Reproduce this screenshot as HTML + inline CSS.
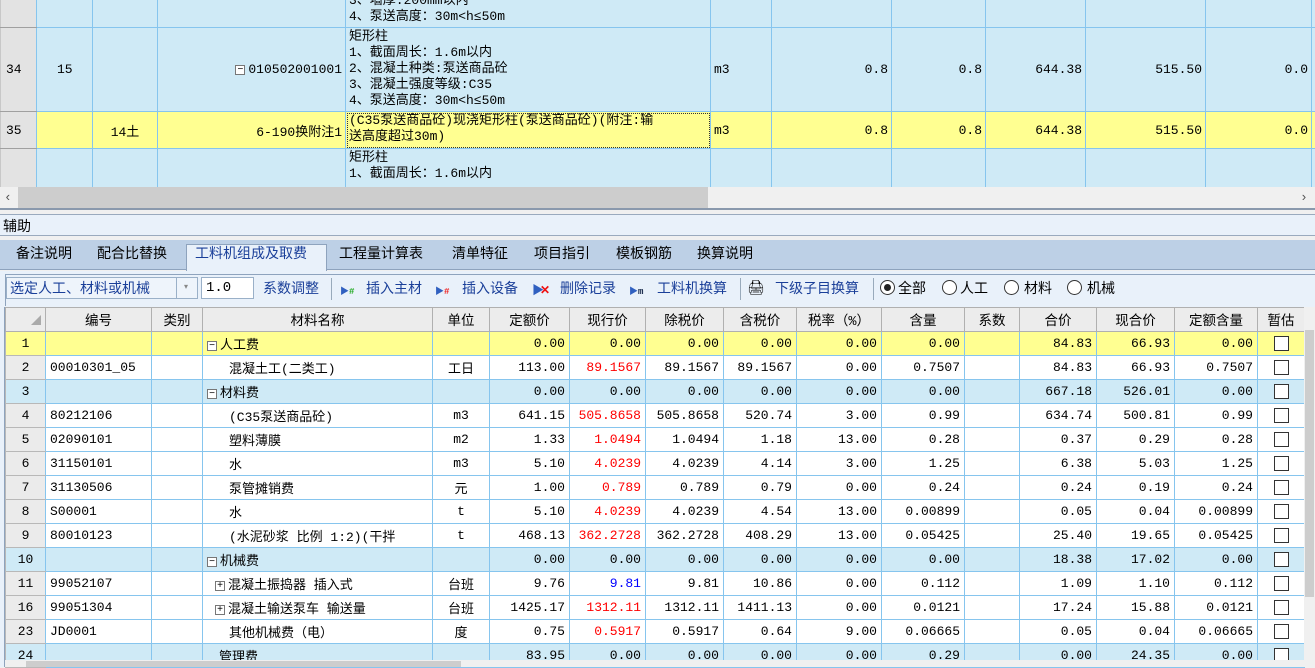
<!DOCTYPE html>
<html><head><meta charset="utf-8">
<style>
*{margin:0;padding:0;box-sizing:border-box}
body{width:1315px;height:667px;overflow:hidden;background:#f0f0f0;font-family:"Liberation Mono","Noto Sans CJK SC",monospace;font-size:13px;color:#000;position:relative}
.abs{position:absolute}
table{border-collapse:collapse;table-layout:fixed;position:absolute}
td{border:1px solid #86c5ee;white-space:nowrap;overflow:hidden;padding:0 3px;vertical-align:middle}
.top td{background:#cfeaf6}
.top td.rh{background:#e3e3e3;border-color:#c8c8c8 #86c5ee #a0a0a0 #c8c8c8;text-align:left;padding-left:5px}
.top tr.y td{background:#ffff91}
.top tr.y td.rh{background:#e3e3e3}
.r{text-align:right}
.c{text-align:center}
.desc{line-height:16px;vertical-align:top;padding-top:1px}
.bot td{height:24px;background:#fff;padding:0 4px}
.bot tr.b td{background:#cfeaf6}
.bot tr.y td{background:#ffff91}
.bot td.rh{background:#ebebeb;text-align:center;border-color:#b8b8b8 #86c5ee #b8b8b8 #b8b8b8}
.bot tr.h td{background:#ececec;text-align:center;border-color:#b0b0b0;font-size:13.5px}
.red{color:#f00}.blu{color:#00f}
.cb{display:inline-block;width:15px;height:15px;border:1px solid #333;background:#fff;vertical-align:middle}
.mi{display:inline-block;width:10px;height:10px;border:1px solid #777;background:#fff;font-size:10px;line-height:8px;text-align:center;vertical-align:middle;margin-right:3px;font-family:"Liberation Sans",sans-serif}
.tab{position:absolute;top:243px;font-size:14px;font-family:"Liberation Sans","Noto Sans CJK SC",sans-serif}
.tb{position:absolute;top:278px;font-size:14px;color:#1a3f99;font-family:"Liberation Sans","Noto Sans CJK SC",sans-serif}
.rad{position:absolute;top:280px;width:15px;height:15px;border:1px solid #333;border-radius:50%;background:#fff}
.sep{position:absolute;top:278px;width:1px;height:22px;background:#9ab}
</style></head><body>

<div class="abs" style="left:0;top:0;width:1315px;height:187px;overflow:hidden;background:#cfeaf6">
<table class="top" style="left:0;top:-56px;width:1420px">
<colgroup><col style="width:36px"><col style="width:56px"><col style="width:65px"><col style="width:188px"><col style="width:365px"><col style="width:61px"><col style="width:120px"><col style="width:94px"><col style="width:100px"><col style="width:120px"><col style="width:106px"><col style="width:109px"></colgroup>
<tr style="height:83px"><td class="rh"></td><td></td><td></td><td></td><td class="desc" style="vertical-align:bottom;padding-bottom:2px">3、墙厚:200mm以内<br>4、泵送高度：30m&lt;h≤50m</td><td></td><td></td><td></td><td></td><td></td><td></td><td></td></tr>
<tr style="height:84px"><td class="rh">34</td><td style="padding-left:20px">15</td><td></td><td class="r"><span class="mi">−</span>010502001001</td><td class="desc">矩形柱<br>1、截面周长：1.6m以内<br>2、混凝土种类:泵送商品砼<br>3、混凝土强度等级:C35<br>4、泵送高度：30m&lt;h≤50m</td><td>m3</td><td class="r">0.8</td><td class="r">0.8</td><td class="r">644.38</td><td class="r">515.50</td><td class="r">0.0</td><td></td></tr>
<tr class="y" style="height:37px"><td class="rh">35</td><td></td><td class="c">14土</td><td class="r">6-190换附注1</td><td class="desc" style="outline:1px dotted #333;outline-offset:-2px">(C35泵送商品砼)现浇矩形柱(泵送商品砼)(附注:输<br>送高度超过30m)</td><td>m3</td><td class="r">0.8</td><td class="r">0.8</td><td class="r">644.38</td><td class="r">515.50</td><td class="r">0.0</td><td></td></tr>
<tr style="height:84px"><td class="rh"></td><td></td><td></td><td></td><td class="desc">矩形柱<br>1、截面周长：1.6m以内</td><td></td><td></td><td></td><td></td><td></td><td></td><td></td></tr>
</table>
</div>
<div class="abs" style="left:0;top:187px;width:1315px;height:21px;background:#f0f0f0"></div>
<div class="abs" style="left:18px;top:187px;width:690px;height:21px;background:#cdcdcd"></div>
<div class="abs" style="left:4px;top:190px;font-size:13px;color:#555">&lsaquo;</div>
<div class="abs" style="left:1300px;top:190px;font-size:13px;color:#555">&rsaquo;</div>
<div class="abs" style="left:0;top:208px;width:1315px;height:2px;background:#8a99ad"></div>
<div class="abs" style="left:0;top:214px;width:1315px;height:22px;background:#e9f1fa;border-top:1px solid #9aaabe;border-bottom:1px solid #9aaabe"></div>
<div class="abs" style="left:3px;top:216px;font-size:14px;font-family:'Liberation Sans','Noto Sans CJK SC',sans-serif">辅助</div>
<div class="abs" style="left:0;top:240px;width:1315px;height:30px;background:#bdd0e6;border-bottom:1px solid #8ea3bd"></div>
<div class="abs" style="left:186px;top:244px;width:141px;height:27px;background:#e9f1fa;border:1px solid #8ea3bd;border-bottom:none"></div>
<div class="tab" style="left:16px">备注说明</div>
<div class="tab" style="left:97px">配合比替换</div>
<div class="tab" style="left:195px;color:#1a3f99">工料机组成及取费</div>
<div class="tab" style="left:339px">工程量计算表</div>
<div class="tab" style="left:452px">清单特征</div>
<div class="tab" style="left:534px">项目指引</div>
<div class="tab" style="left:616px">模板钢筋</div>
<div class="tab" style="left:697px">换算说明</div>
<div class="abs" style="left:0;top:271px;width:1315px;height:36px;background:#e9f1fa"></div>
<div class="abs" style="left:5px;top:274px;width:1310px;height:32px;border-top:1px solid #8ea3bd;border-left:1px solid #8ea3bd"></div>
<div class="abs" style="left:6px;top:277px;width:192px;height:22px;border:1px solid #9ab0c8;background:#eef4fb"></div>
<div class="abs" style="left:176px;top:278px;width:1px;height:20px;background:#9ab0c8"></div>
<div class="abs" style="left:184px;top:282px;font-size:8px;color:#888">▾</div>
<div class="tb" style="left:10px;top:278px">选定人工、材料或机械</div>
<div class="abs" style="left:201px;top:277px;width:53px;height:22px;border:1px solid #9ab0c8;background:#fff;padding:2px 4px;font-size:14px">1.0</div>
<div class="tb" style="left:263px">系数调整</div>
<div class="sep" style="left:331px"></div>
<div class="abs" style="left:340px;top:284px;font-size:9px;color:#3060c0">▶<span style="color:#2a2;font-weight:bold">#</span></div>
<div class="tb" style="left:366px">插入主材</div>
<div class="abs" style="left:435px;top:284px;font-size:9px;color:#3060c0">▶<span style="color:#e22;font-weight:bold">#</span></div>
<div class="tb" style="left:462px">插入设备</div>
<div class="abs" style="left:532px;top:281px;font-size:12px;color:#3060c0">▶<span style="color:#e11;font-weight:bold;margin-left:-4px">✕</span></div>
<div class="tb" style="left:560px">删除记录</div>
<div class="abs" style="left:629px;top:284px;font-size:9px;color:#3060c0">▶<b style="color:#124">m</b></div>
<div class="tb" style="left:657px">工料机换算</div>
<div class="sep" style="left:740px"></div>
<div class="abs" style="left:747px;top:280px;font-size:14px">🖨</div>
<div class="tb" style="left:775px">下级子目换算</div>
<div class="sep" style="left:873px"></div>
<div class="rad" style="left:880px"><div style="margin:3px;width:7px;height:7px;border-radius:50%;background:#222"></div></div>
<div class="tb" style="left:898px;color:#000">全部</div>
<div class="rad" style="left:942px"></div><div class="tb" style="left:960px;color:#000">人工</div>
<div class="rad" style="left:1004px"></div><div class="tb" style="left:1024px;color:#000">材料</div>
<div class="rad" style="left:1067px"></div><div class="tb" style="left:1087px;color:#000">机械</div>

<div class="abs" style="left:0;top:307px;width:1315px;height:360px;background:#fff"></div>
<table class="bot" style="left:5px;top:307px;width:1299px">
<colgroup><col style="width:40px"><col style="width:106px"><col style="width:51px"><col style="width:230px"><col style="width:57px"><col style="width:80px"><col style="width:76px"><col style="width:78px"><col style="width:73px"><col style="width:85px"><col style="width:83px"><col style="width:55px"><col style="width:77px"><col style="width:78px"><col style="width:83px"><col style="width:47px"></colgroup>
<tr class="h"><td style="text-align:right;color:#aaa;font-size:10px">◢</td><td>编号</td><td>类别</td><td>材料名称</td><td>单位</td><td>定额价</td><td>现行价</td><td>除税价</td><td>含税价</td><td>税率（%）</td><td>含量</td><td>系数</td><td>合价</td><td>现合价</td><td>定额含量</td><td>暂估</td></tr>
<tr class="y"><td class="rh">1</td><td></td><td></td><td><span class="mi">−</span>人工费</td><td></td><td class="r">0.00</td><td class="r">0.00</td><td class="r">0.00</td><td class="r">0.00</td><td class="r">0.00</td><td class="r">0.00</td><td></td><td class="r">84.83</td><td class="r">66.93</td><td class="r">0.00</td><td class="c"><span class="cb"></span></td></tr>
<tr><td class="rh">2</td><td>00010301_05</td><td></td><td style="padding-left:26px">混凝土工(二类工)</td><td class="c">工日</td><td class="r">113.00</td><td class="r red">89.1567</td><td class="r">89.1567</td><td class="r">89.1567</td><td class="r">0.00</td><td class="r">0.7507</td><td></td><td class="r">84.83</td><td class="r">66.93</td><td class="r">0.7507</td><td class="c"><span class="cb"></span></td></tr>
<tr class="b"><td class="rh">3</td><td></td><td></td><td><span class="mi">−</span>材料费</td><td></td><td class="r">0.00</td><td class="r">0.00</td><td class="r">0.00</td><td class="r">0.00</td><td class="r">0.00</td><td class="r">0.00</td><td></td><td class="r">667.18</td><td class="r">526.01</td><td class="r">0.00</td><td class="c"><span class="cb"></span></td></tr>
<tr><td class="rh">4</td><td>80212106</td><td></td><td style="padding-left:26px">(C35泵送商品砼)</td><td class="c">m3</td><td class="r">641.15</td><td class="r red">505.8658</td><td class="r">505.8658</td><td class="r">520.74</td><td class="r">3.00</td><td class="r">0.99</td><td></td><td class="r">634.74</td><td class="r">500.81</td><td class="r">0.99</td><td class="c"><span class="cb"></span></td></tr>
<tr><td class="rh">5</td><td>02090101</td><td></td><td style="padding-left:26px">塑料薄膜</td><td class="c">m2</td><td class="r">1.33</td><td class="r red">1.0494</td><td class="r">1.0494</td><td class="r">1.18</td><td class="r">13.00</td><td class="r">0.28</td><td></td><td class="r">0.37</td><td class="r">0.29</td><td class="r">0.28</td><td class="c"><span class="cb"></span></td></tr>
<tr><td class="rh">6</td><td>31150101</td><td></td><td style="padding-left:26px">水</td><td class="c">m3</td><td class="r">5.10</td><td class="r red">4.0239</td><td class="r">4.0239</td><td class="r">4.14</td><td class="r">3.00</td><td class="r">1.25</td><td></td><td class="r">6.38</td><td class="r">5.03</td><td class="r">1.25</td><td class="c"><span class="cb"></span></td></tr>
<tr><td class="rh">7</td><td>31130506</td><td></td><td style="padding-left:26px">泵管摊销费</td><td class="c">元</td><td class="r">1.00</td><td class="r red">0.789</td><td class="r">0.789</td><td class="r">0.79</td><td class="r">0.00</td><td class="r">0.24</td><td></td><td class="r">0.24</td><td class="r">0.19</td><td class="r">0.24</td><td class="c"><span class="cb"></span></td></tr>
<tr><td class="rh">8</td><td>S00001</td><td></td><td style="padding-left:26px">水</td><td class="c">t</td><td class="r">5.10</td><td class="r red">4.0239</td><td class="r">4.0239</td><td class="r">4.54</td><td class="r">13.00</td><td class="r">0.00899</td><td></td><td class="r">0.05</td><td class="r">0.04</td><td class="r">0.00899</td><td class="c"><span class="cb"></span></td></tr>
<tr><td class="rh">9</td><td>80010123</td><td></td><td style="padding-left:26px">(水泥砂浆 比例 1:2)(干拌</td><td class="c">t</td><td class="r">468.13</td><td class="r red">362.2728</td><td class="r">362.2728</td><td class="r">408.29</td><td class="r">13.00</td><td class="r">0.05425</td><td></td><td class="r">25.40</td><td class="r">19.65</td><td class="r">0.05425</td><td class="c"><span class="cb"></span></td></tr>
<tr class="b"><td class="rh">10</td><td></td><td></td><td><span class="mi">−</span>机械费</td><td></td><td class="r">0.00</td><td class="r">0.00</td><td class="r">0.00</td><td class="r">0.00</td><td class="r">0.00</td><td class="r">0.00</td><td></td><td class="r">18.38</td><td class="r">17.02</td><td class="r">0.00</td><td class="c"><span class="cb"></span></td></tr>
<tr><td class="rh">11</td><td>99052107</td><td></td><td style="padding-left:12px"><span class="mi">+</span>混凝土振捣器 插入式</td><td class="c">台班</td><td class="r">9.76</td><td class="r blu">9.81</td><td class="r">9.81</td><td class="r">10.86</td><td class="r">0.00</td><td class="r">0.112</td><td></td><td class="r">1.09</td><td class="r">1.10</td><td class="r">0.112</td><td class="c"><span class="cb"></span></td></tr>
<tr><td class="rh">16</td><td>99051304</td><td></td><td style="padding-left:12px"><span class="mi">+</span>混凝土输送泵车 输送量</td><td class="c">台班</td><td class="r">1425.17</td><td class="r red">1312.11</td><td class="r">1312.11</td><td class="r">1411.13</td><td class="r">0.00</td><td class="r">0.0121</td><td></td><td class="r">17.24</td><td class="r">15.88</td><td class="r">0.0121</td><td class="c"><span class="cb"></span></td></tr>
<tr><td class="rh">23</td><td>JD0001</td><td></td><td style="padding-left:26px">其他机械费（电）</td><td class="c">度</td><td class="r">0.75</td><td class="r red">0.5917</td><td class="r">0.5917</td><td class="r">0.64</td><td class="r">9.00</td><td class="r">0.06665</td><td></td><td class="r">0.05</td><td class="r">0.04</td><td class="r">0.06665</td><td class="c"><span class="cb"></span></td></tr>
<tr class="b"><td class="rh">24</td><td></td><td></td><td style="padding-left:16px">管理费</td><td></td><td class="r">83.95</td><td class="r">0.00</td><td class="r">0.00</td><td class="r">0.00</td><td class="r">0.00</td><td class="r">0.29</td><td></td><td class="r">0.00</td><td class="r">24.35</td><td class="r">0.00</td><td class="c"><span class="cb"></span></td></tr>
</table>
<div class="abs" style="left:1304px;top:307px;width:11px;height:360px;background:#f0f0f0"></div>
<div class="abs" style="left:1305px;top:330px;width:9px;height:267px;background:#cdcdcd"></div>
<div class="abs" style="left:0;top:660px;width:1304px;height:7px;background:#f0f0f0"></div>
<div class="abs" style="left:26px;top:661px;width:435px;height:6px;background:#cdcdcd"></div>
<div class="abs" style="left:0;top:307px;width:5px;height:360px;background:#e9f1fa;border-right:1px solid #8ea3bd"></div>
</body></html>
